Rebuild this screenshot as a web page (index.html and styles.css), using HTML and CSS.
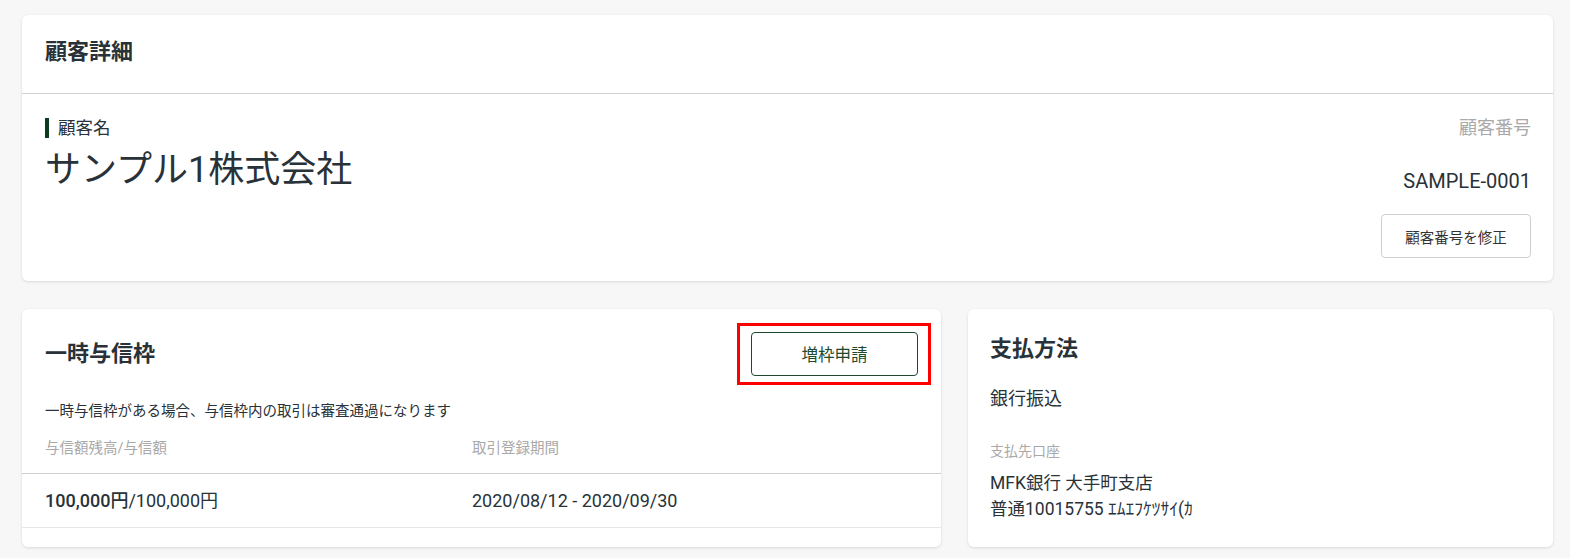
FILE: index.html
```html
<!DOCTYPE html>
<html>
<head>
    <title>顧客詳細</title>
    <link rel="stylesheet" href="styles.css">
</head>
<body>
    <div class="page">
        <div class="card customer-card">
            <div class="card-header">
                <h2>顧客詳細</h2>
            </div>
            <div class="customer-body">
                <div class="customer-name">
                    <div class="label-bar">顧客名</div>
                    <div class="name">サンプル1株式会社</div>
                </div>
                <div class="customer-number">
                    <div class="number-label">顧客番号</div>
                    <div class="number-value">SAMPLE-0001</div>
                    <button class="btn">顧客番号を修正</button>
                </div>
            </div>
        </div>

        <div class="row">
            <div class="card credit-card">
                <div class="credit-head">
                    <h2>一時与信枠</h2>
                    <div class="highlight">
                        <button class="btn btn-green">増枠申請</button>
                    </div>
                </div>
                <p class="note">一時与信枠がある場合、与信枠内の取引は審査通過になります</p>
                <div class="credit-table">
                    <div class="th">与信額残高/与信額</div>
                    <div class="th">取引登録期間</div>
                    <div class="td"><strong>100,000円</strong>/100,000円</div>
                    <div class="td">2020/08/12 - 2020/09/30</div>
                </div>
            </div>

            <div class="card payment-card">
                <h2>支払方法</h2>
                <div class="pay-method">銀行振込</div>
                <div class="sub-label">支払先口座</div>
                <div class="account">MFK銀行 大手町支店<br>普通10015755 ｴﾑｴﾌｹﾂｻｲ(ｶ</div>
            </div>
        </div>
    </div>
</body>
</html>
```

FILE: styles.css
```css
body {
    font-family: Roboto, "Noto Sans CJK JP", sans-serif;
    background-color: #f7f7f7;
    color: #283238;
    margin: 0;
    padding: 0;
}

.page {
    padding: 15px 17px 12px 22px;
}

.card {
    background-color: #fff;
    border-radius: 6px;
    box-shadow: 0 1px 3px rgba(0, 0, 0, 0.12);
}

h2 {
    margin: 0;
    font-weight: bold;
    font-size: 22px;
}

.card-header {
    height: 78px;
    display: flex;
    align-items: center;
    padding: 0 23px;
    border-bottom: 1px solid #d3d3d3;
}

.card-header h2 {
    line-height: 30px;
    margin-top: -4px;
}

.customer-body {
    display: flex;
    justify-content: space-between;
    padding: 24px 22px 23px 23px;
}

.label-bar {
    border-left: 4px solid #0d3b20;
    padding-left: 9px;
    font-size: 17.5px;
    line-height: 20px;
}

.name {
    font-size: 36px;
    line-height: 44px;
    margin-top: 10px;
}

.customer-number {
    display: flex;
    flex-direction: column;
    align-items: flex-end;
}

.number-label {
    font-size: 18px;
    color: #a9a9a9;
    line-height: 20px;
}

.number-value {
    font-size: 20px;
    line-height: 24px;
    margin-top: 31px;
}

.btn {
    font-family: inherit;
    background-color: #fff;
    border: 1px solid #cfcfcf;
    border-radius: 4px;
    color: #333;
    font-size: 14.5px;
    cursor: pointer;
}

.customer-number .btn {
    margin-top: 21px;
    width: 150px;
    height: 44px;
}

.row {
    display: flex;
    gap: 27px;
    margin-top: 28px;
}

.credit-card {
    width: 919px;
    padding-bottom: 19px;
}

.credit-head {
    display: flex;
    justify-content: space-between;
    align-items: center;
    padding: 14px 10px 0 23px;
}

.credit-head h2 {
    line-height: 30px;
}

.highlight {
    border: 3px solid #f00;
    padding: 6px 10px 6px 11px;
}

.btn-green {
    width: 167px;
    height: 44px;
    border-color: #1d4a2c;
    color: #1d4a2c;
    font-size: 16.5px;
}

.note {
    font-size: 14.5px;
    margin: 17px 23px 0;
    line-height: 20px;
}

.credit-table {
    display: grid;
    grid-template-columns: 427px 1fr;
    margin-top: 17px;
}

.th {
    font-size: 14.5px;
    line-height: 20px;
    color: #a9a9a9;
    padding: 0 23px;
    height: 34px;
    border-bottom: 1px solid #cfcfcf;
}

.td {
    font-size: 18px;
    padding: 0 23px;
    height: 53px;
    line-height: 53px;
    border-bottom: 1px solid #e6e6e6;
}

.td strong {
    font-weight: 500;
}

.payment-card {
    flex: 1;
    padding: 25px 22px 22px 22px;
}

.payment-card h2 {
    line-height: 30px;
}

.pay-method {
    font-size: 18px;
    line-height: 24px;
    margin-top: 23px;
}

.sub-label {
    font-size: 14px;
    line-height: 20px;
    color: #a9a9a9;
    margin-top: 30px;
}

.account {
    font-size: 17.5px;
    line-height: 26px;
    margin-top: 9px;
}
```
